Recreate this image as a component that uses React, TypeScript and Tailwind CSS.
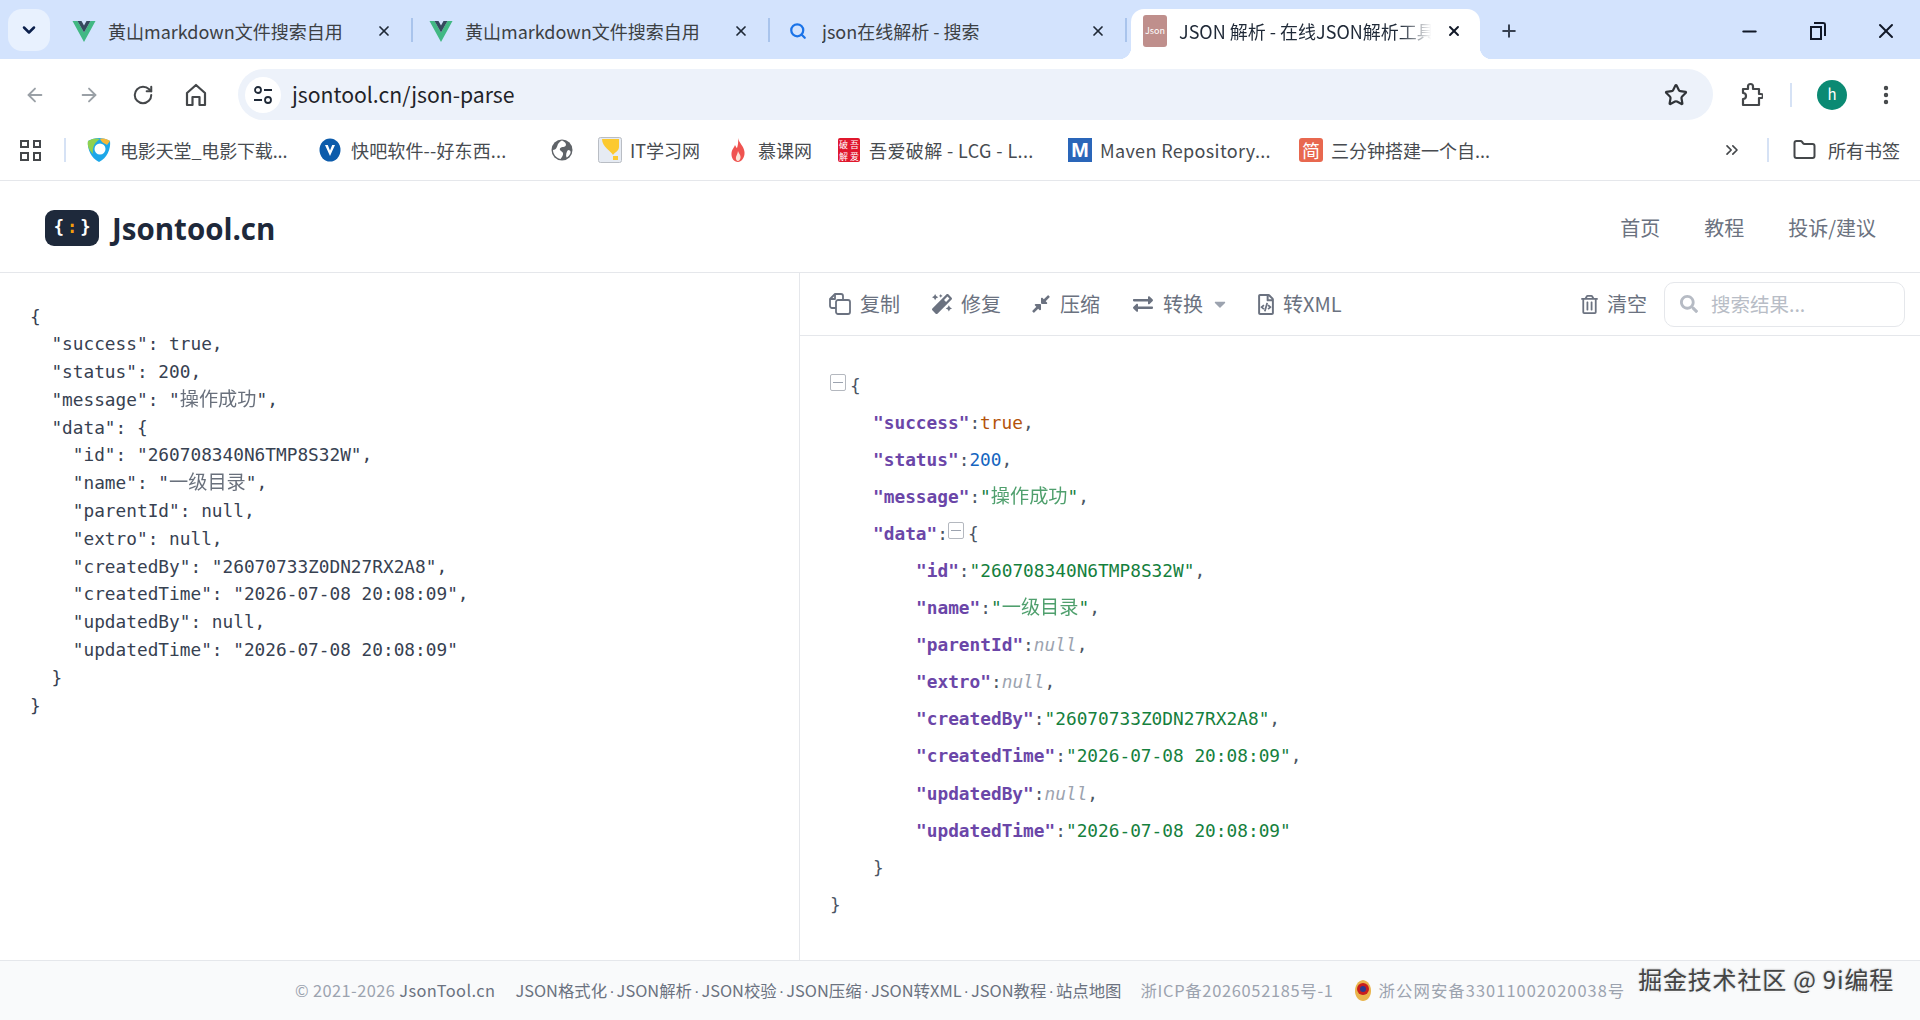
import { ArrowLeft, ArrowRight, RotateCw, Star, MoreVertical, Folder, ChevronsRight, Minus, X, Plus, ChevronDown, Search } from "lucide-react";
import { FaMagic, FaCompressAlt, FaExchangeAlt, FaCaretDown, FaRegFileCode, FaRegTrashAlt, FaSearch } from "react-icons/fa";
import type { ReactNode } from "react";

const Vue = () => (
  <svg viewBox="0 0 24 24" className="w-6 h-6 shrink-0">
    <path d="M0.5 2 L12 23 L23.5 2 H18.5 L12 13.5 L5.5 2 Z" fill="#41b883" />
    <path d="M5.5 2 L12 13.5 L18.5 2 H14.5 L12 6.5 L9.5 2 Z" fill="#35495e" />
  </svg>
);

const Tab = ({ icon, title }: { icon: ReactNode; title: string }) => (
  <div className="relative flex h-[50px] w-[357px] shrink-0 items-center gap-3 pb-[6px] pl-[15px]">
    {icon}
    <span className="flex-1 truncate text-[18px] text-[#3c4043]">{title}</span>
    <X className="mr-[22px] h-4 w-4 shrink-0 text-[#1f2937]" strokeWidth={2.6} />
    <span className="absolute right-[1px] top-[9px] h-6 w-[2px] bg-[#a9c4ec]" />
  </div>
);

const ActiveTab = () => (
  <div className="relative flex h-[50px] w-[349px] shrink-0 items-center rounded-t-[13px] bg-white pb-[6px] pl-3">
    <span className="absolute -left-3 bottom-0 h-3 w-3 bg-[radial-gradient(circle_at_0_0,#d3e3fd_12px,#ffffff_12.5px)]" />
    <span className="absolute -right-3 bottom-0 h-3 w-3 bg-[radial-gradient(circle_at_100%_0,#d3e3fd_12px,#ffffff_12.5px)]" />
    <span className="flex h-8 w-6 shrink-0 items-center justify-center rounded-[3px] bg-[#bf8f8c] text-[9px] text-white">Json</span>
    <span className="ml-[12px] w-[263px] shrink-0 overflow-hidden whitespace-nowrap text-[18px] text-[#1f2937] [mask-image:linear-gradient(to_right,#000_84%,transparent_96%)]">JSON 解析 - 在线JSON解析工具</span>
    <X className="ml-[4px] h-4 w-4 shrink-0 text-[#111827]" strokeWidth={2.8} />
  </div>
);

const Bookmark = ({ icon, text, cls }: { icon: ReactNode; text?: string; cls: string }) => (
  <div className={`flex shrink-0 items-center ${cls}`}>
    {icon}
    {text && <span className="whitespace-nowrap text-[18px] text-[#474b50]">{text}</span>}
  </div>
);

const BM = {
  movie: (
    <svg viewBox="0 0 24 26" className="h-[26px] w-6 shrink-0">
      <path d="M1 4 C8 0 16 0 23 4 C24 12 20 21 12 25 C4 21 0 12 1 4Z" fill="#1da7e8" />
      <path d="M1 4 C6 1 10 1 13 2 C8 5 5 10 6 17 C2 13 0 9 1 4Z" fill="#8fd14f" />
      <path d="M13 2 C17 1 20 2 23 4 L20 8 C17 6 15 6 13 2Z" fill="#f5b93a" />
      <circle cx="13" cy="12" r="5.5" fill="#fff" />
    </svg>
  ),
  kuaiba: (
    <svg viewBox="0 0 22 24" className="h-6 w-[22px] shrink-0">
      <ellipse cx="11" cy="12" rx="10.5" ry="11.5" fill="#0d5cab" />
      <path d="M6 7 L11 18 L16 7 L13.2 7 L11 12.5 L8.8 7Z" fill="#fff" />
    </svg>
  ),
  globe: (
    <svg viewBox="0 0 22 22" className="h-[22px] w-[22px] shrink-0">
      <circle cx="11" cy="11" r="10.5" fill="#5f6368" />
      <path d="M11 1.5 C14 3 16 5 14.5 7 C13 8.5 10 7.5 9 9.5 C8 11.5 11 12 12 14 C12.5 16 11 18 9.5 20 C5 19 2 15 2 11 C5 11 6 8 7 5 C8 3.5 9.5 2 11 1.5Z M17 11 C19 11 20 12 19.5 14 C18.5 16.5 17 18 15.5 18.5 C14.5 16 15.5 12.5 17 11Z" fill="#fff" />
    </svg>
  ),
  it: (
    <svg viewBox="0 0 24 26" className="h-[26px] w-6 shrink-0">
      <rect x="0.5" y="0.5" width="23" height="25" rx="2" fill="#e6ebf3" stroke="#b9bdc4" />
      <path d="M4 2 H21 V10 C21 14 17 15 15 18 C13 14 4 10 4 2Z" fill="#fcc92f" />
      <rect x="15" y="19" width="5" height="4" fill="#fcc92f" />
    </svg>
  ),
  fire: (
    <svg viewBox="0 0 14 24" className="h-6 w-[14px] shrink-0">
      <path d="M7 0 C8 5 13 8 13.5 14 C14 20 10 24 7 24 C3 24 0 20 0.5 15 C1 11 3 10 4 7 C5 9 5.5 10 6 10 C7 7 7.5 4 7 0Z" fill="#ef5350" />
      <path d="M7 13 C8 16 10 17 9.5 20 C9 22 8 23 7 23 C5.5 23 4.5 21 5 19 C5.5 17 6.5 16 7 13Z" fill="#fbe3d6" />
    </svg>
  ),
  crack: (
    <span className="grid h-6 w-[22px] shrink-0 grid-cols-2 place-items-center overflow-hidden rounded-[2px] bg-[#e0182d] text-[9px] leading-[11px] text-white">
      <span>破</span><span>吾</span><span>解</span><span>爱</span>
    </span>
  ),
  maven: <span className="flex h-6 w-6 shrink-0 items-center justify-center bg-[#2a66b9] text-[21px] font-bold text-white [font-family:'Liberation_Sans',sans-serif]">M</span>,
  jian: <span className="flex h-6 w-6 shrink-0 items-center justify-center rounded-[3px] bg-[#e8684f] text-[18px] text-white">简</span>,
};

const Cjk = ({ children }: { children: ReactNode }) => (
  <span className="text-[19.2px] leading-[0] opacity-75 [font-family:'Noto_Sans_CJK_SC',sans-serif]">{children}</span>
);

const leftLines: ReactNode[] = [
  "{",
  '  "success": true,',
  '  "status": 200,',
  <>  "message": "<Cjk>操作成功</Cjk>",</>,
  '  "data": {',
  '    "id": "260708340N6TMP8S32W",',
  <>    "name": "<Cjk>一级目录</Cjk>",</>,
  '    "parentId": null,',
  '    "extro": null,',
  '    "createdBy": "26070733Z0DN27RX2A8",',
  '    "createdTime": "2026-07-08 20:08:09",',
  '    "updatedBy": null,',
  '    "updatedTime": "2026-07-08 20:08:09"',
  "  }",
  "}",
];

const Fold = () => (
  <span className="relative inline-block h-[17px] w-[16px] shrink-0 rounded-[2px] border border-[#b4b8bf] align-[1px]">
    <span className="absolute left-[2px] right-[2px] top-[7px] h-[1px] bg-[#9ca3af]" />
  </span>
);

const K = ({ children }: { children: string }) => <span className="font-bold text-[#6b46a8]">"{children}"</span>;
const S = ({ children }: { children: ReactNode }) => <span className="text-[#15803d]">"{children}"</span>;
const Null = () => <span className="italic text-[#9ca3af]">null</span>;
const P = ({ children }: { children: string }) => <span className="text-[#4b5563]">{children}</span>;

const Row = ({ pl, children }: { pl: string; children: ReactNode }) => (
  <div className={`h-[37.1px] whitespace-pre leading-[37.1px] ${pl}`}>{children}</div>
);

const Tool = ({ icon, label, cls }: { icon: ReactNode; label: string; cls?: string }) => (
  <div className={`flex items-center gap-[9px] text-[20px] text-[#6b7280] ${cls ?? ""}`}>
    {icon}
    <span>{label}</span>
  </div>
);

const CopyIcon = () => (
  <svg viewBox="0 0 22 22" className="h-[22px] w-[22px]" fill="none" stroke="currentColor" strokeWidth="1.8" strokeLinejoin="round">
    <path d="M7 15 H3 A2 2 0 0 1 1 13 V6 L6 1 H12 A2 2 0 0 1 14 3 V7" />
    <path d="M1 6 H6 V1" />
    <path d="M9 7 H19 A2 2 0 0 1 21 9 V19 A2 2 0 0 1 19 21 H9 A2 2 0 0 1 7 19 V9 A2 2 0 0 1 9 7 Z" />
  </svg>
);

const Dot = () => <span className="px-[2px] font-['Liberation_Sans',sans-serif]">·</span>;

export default function App() {
  return (
    <div className="relative flex h-[1020px] w-full flex-col overflow-hidden bg-white font-['Noto_Sans_CJK_SC',sans-serif]">
      {/* tab strip */}
      <div className="flex h-[59px] shrink-0 items-end bg-[#d3e3fd] pl-2">
        <div className="mb-2 flex h-[42px] w-[42px] shrink-0 items-center justify-center rounded-[14px] bg-[#e8f1fe]">
          <ChevronDown className="h-5 w-5 text-[#0b1f4b]" strokeWidth={3} />
        </div>
        <div className="ml-[7px] flex items-center">
          <Tab icon={<Vue />} title="黄山markdown文件搜索自用" />
          <Tab icon={<Vue />} title="黄山markdown文件搜索自用" />
          <Tab icon={<Search className="h-[18px] w-6 shrink-0 text-[#1a73e8]" strokeWidth={3} />} title="json在线解析 - 搜索" />
        </div>
        <div className="ml-[3px]"><ActiveTab /></div>
        <div className="flex h-[50px] flex-1 items-center pb-[6px]">
          <Plus className="ml-[19px] h-5 w-5 text-[#374151]" strokeWidth={2.4} />
          <div className="ml-auto flex items-center pr-[22px]">
            <Minus className="mr-[50px] h-[21px] w-[21px] text-[#111827]" strokeWidth={2.5} />
            <div className="relative mr-[48px] h-[18px] w-[16px]">
              <span className="absolute bottom-0 left-0 h-[14px] w-[12px] border-2 border-[#111827] bg-[#d3e3fd]" />
              <span className="absolute right-0 top-0 h-[14px] w-[12px] rounded-tr-[3px] border-r-2 border-t-2 border-[#111827]" />
            </div>
            <X className="h-6 w-6 text-[#111827]" strokeWidth={2} />
          </div>
        </div>
      </div>

      {/* toolbar */}
      <div className="flex h-[61px] shrink-0 items-end rounded-tl-[10px] bg-white pl-[24px]">
        <div className="flex h-[51px] w-full items-center">
          <ArrowLeft className="h-[22px] w-[22px] text-[#9aa0a6]" strokeWidth={2} />
          <ArrowRight className="ml-[32px] h-[22px] w-[22px] text-[#9aa0a6]" strokeWidth={2} />
          <RotateCw className="ml-[32px] h-[22px] w-[22px] text-[#44474a]" strokeWidth={2.2} />
          <svg viewBox="0 0 22 24" className="ml-[31px] h-6 w-[22px]" fill="none" stroke="#44474a" strokeWidth="2.2" strokeLinejoin="round">
            <path d="M2 10 L11 2 L20 10 V22 H14.5 V14 H7.5 V22 H2 Z" />
          </svg>
          <div className="ml-[31px] flex h-[51px] w-[1475px] items-center rounded-full bg-[#edf2fa] pl-[7px]">
            <div className="flex h-[36px] w-[36px] items-center justify-center rounded-full bg-white">
              <svg viewBox="0 0 20 20" className="h-5 w-5" fill="none" stroke="#1f2937" strokeWidth="1.8">
                <circle cx="5" cy="5" r="3" />
                <path d="M11 5 H19 M1 15 H9" />
                <circle cx="15" cy="15" r="3" />
              </svg>
            </div>
            <span className="mb-[2px] ml-[11px] text-[21.2px] text-[#1f2328]">jsontool.cn/json-parse</span>
            <Star className="ml-auto mr-[25px] h-[24px] w-[24px] text-[#2f3337]" strokeWidth={2.2} />
          </div>
          <svg viewBox="0 0 24 24" className="ml-[26px] h-[28px] w-[24px]" fill="none" stroke="#44474a" strokeWidth="2.2" strokeLinejoin="round">
            <path d="M4 6 H9 V3.5 A2.5 2.5 0 0 1 14 3.5 V6 H20 V11 H22 A2 2 0 0 1 22 15 H20 V22 H4 V16 A3 3 0 0 0 4 10 Z" />
          </svg>
          <span className="ml-[27px] h-6 w-[2px] bg-[#d6e2f5]" />
          <span className="ml-[25px] flex h-[30px] w-[30px] items-center justify-center rounded-full bg-[#0b8a73] text-[15px] text-white">h</span>
          <MoreVertical className="ml-[27px] h-6 w-6 text-[#44474a]" strokeWidth={2.4} />
        </div>
      </div>

      {/* bookmarks */}
      <div className="flex h-[61px] shrink-0 items-center border-b border-[#e5e7eb] pl-5">
        <div className="grid h-[21px] w-[21px] shrink-0 grid-cols-2 gap-[4px]">
          <span className="border-2 border-[#44474a]" /><span className="border-2 border-[#44474a]" />
          <span className="border-2 border-[#44474a]" /><span className="border-2 border-[#44474a]" />
        </div>
        <span className="ml-[23px] mr-[21px] h-6 w-[2px] bg-[#d6e2f5]" />
        <Bookmark icon={BM.movie} text="电影天堂_电影下载..." cls="w-[232px] gap-[9px] [&>span:last-child]:-tracking-[0.15px]" />
        <Bookmark icon={BM.kuaiba} text="快吧软件--好东西..." cls="w-[232px] gap-[10px] [&>span]:tracking-[0.15px]" />
        <Bookmark icon={BM.globe} cls="w-[47px]" />
        <Bookmark icon={BM.it} text="IT学习网" cls="w-[133px] gap-[8px]" />
        <Bookmark icon={BM.fire} text="慕课网" cls="w-[107px] gap-[13px]" />
        <Bookmark icon={BM.crack} text="吾爱破解 - LCG - L..." cls="w-[230px] gap-[9px] [&>span:last-child]:tracking-[0.4px]" />
        <Bookmark icon={BM.maven} text="Maven Repository..." cls="w-[231px] gap-[8px] [&>span:last-child]:tracking-[0.35px]" />
        <Bookmark icon={BM.jian} text="三分钟搭建一个自..." cls="w-[220px] gap-[8px]" />
        <div className="ml-auto flex items-center pr-5">
          <ChevronsRight className="h-5 w-5 text-[#44474a]" strokeWidth={2} />
          <span className="ml-[25px] h-6 w-[2px] bg-[#d6e2f5]" />
          <Folder className="ml-[23px] h-[24px] w-[25px] text-[#44474a]" strokeWidth={2} />
          <span className="ml-[11px] text-[18px] text-[#474b50]">所有书签</span>
        </div>
      </div>

      {/* site header */}
      <div className="flex h-[92px] shrink-0 items-center border-b border-[#e5e7eb] pl-[45px] pr-[44px] pt-[2px]">
        <div className="flex h-9 w-[54px] items-center justify-center gap-[3px] rounded-[9px] bg-[#1e293b] font-['DejaVu_Sans_Mono',monospace] text-[17px] font-bold text-white">
          <span>{"{"}</span><span className="text-[#f59e0b]">:</span><span>{"}"}</span>
        </div>
        <span className="ml-[13px] mt-[3px] font-['Open_Sans',sans-serif] text-[29.5px] font-bold leading-none text-[#1e293b]">Jsontool.cn</span>
        <nav className="ml-auto flex items-center gap-[44px] text-[20px] text-[#6b7280]">
          <span>首页</span><span>教程</span><span>投诉/建议</span>
        </nav>
      </div>

      {/* main */}
      <div className="flex min-h-0 flex-1">
        <div className="w-[800px] shrink-0 border-r border-[#e5e7eb] pl-[30px] pt-[29.5px]">
          <div className="font-['DejaVu_Sans_Mono','Noto_Sans_CJK_SC',monospace] text-[17.78px] leading-[27.8px] text-[#374151]">
            {leftLines.map((l, i) => (
              <div key={i} className="h-[27.8px] whitespace-pre">{l}</div>
            ))}
          </div>
        </div>
        <div className="flex min-w-0 flex-1 flex-col">
          <div className="flex h-[63px] shrink-0 items-center border-b border-[#e5e7eb] pl-[29px] pr-[15px]">
            <Tool icon={<CopyIcon />} label="复制" cls="mr-[32px]" />
            <Tool icon={<FaMagic className="h-5 w-5" />} label="修复" cls="mr-[30px]" />
            <Tool icon={<FaCompressAlt className="h-[20px] w-[20px]" />} label="压缩" cls="mr-[32px]" />
            <Tool icon={<FaExchangeAlt className="h-[20px] w-[22px]" />} label="转换" />
            <FaCaretDown className="ml-[10px] mr-[30px] h-[18px] w-[14px] text-[#9ca3af]" />
            <Tool icon={<FaRegFileCode className="h-[21px] w-[18px]" />} label="转XML" cls="[&>span]:-ml-[1px]" />
            <Tool icon={<FaRegTrashAlt className="h-[19px] w-[17px]" />} label="清空" cls="ml-auto" />
            <div className="ml-[17px] flex h-[45px] w-[241px] items-center rounded-[10px] border border-[#e5e7eb] pl-[15px]">
              <FaSearch className="h-[18px] w-[18px] text-[#b6bbc4]" />
              <span className="ml-[13px] text-[19.5px] text-[#b8bdc6]">搜索结果...</span>
            </div>
          </div>
          <div className="pl-[30px] pt-[30.5px] font-['DejaVu_Sans_Mono','Noto_Sans_CJK_SC',monospace] text-[17.8px] text-[#4b5563]">
            <Row pl="pl-0"><Fold /><span className="ml-1">{"{"}</span></Row>
            <Row pl="pl-[43px]"><K>success</K><P>:</P><span className="text-[#b45309]">true</span><P>,</P></Row>
            <Row pl="pl-[43px]"><K>status</K><P>:</P><span className="text-[#1565c0]">200</span><P>,</P></Row>
            <Row pl="pl-[43px]"><K>message</K><P>:</P><S><Cjk>操作成功</Cjk></S><P>,</P></Row>
            <Row pl="pl-[43px]"><K>data</K><P>:</P><Fold /><span className="ml-1">{"{"}</span></Row>
            <Row pl="pl-[86px]"><K>id</K><P>:</P><S>260708340N6TMP8S32W</S><P>,</P></Row>
            <Row pl="pl-[86px]"><K>name</K><P>:</P><S><Cjk>一级目录</Cjk></S><P>,</P></Row>
            <Row pl="pl-[86px]"><K>parentId</K><P>:</P><Null /><P>,</P></Row>
            <Row pl="pl-[86px]"><K>extro</K><P>:</P><Null /><P>,</P></Row>
            <Row pl="pl-[86px]"><K>createdBy</K><P>:</P><S>26070733Z0DN27RX2A8</S><P>,</P></Row>
            <Row pl="pl-[86px]"><K>createdTime</K><P>:</P><S>2026-07-08 20:08:09</S><P>,</P></Row>
            <Row pl="pl-[86px]"><K>updatedBy</K><P>:</P><Null /><P>,</P></Row>
            <Row pl="pl-[86px]"><K>updatedTime</K><P>:</P><S>2026-07-08 20:08:09</S></Row>
            <Row pl="pl-[43px]">{"}"}</Row>
            <Row pl="pl-0">{"}"}</Row>
          </div>
        </div>
      </div>

      {/* footer */}
      <div className="flex h-[60px] shrink-0 items-center border-t border-[#e5e7eb] bg-[#f9fafb] pl-[295px] text-[16.4px] text-[#9ca3af]">
        <span className="tracking-[0.4px]">© 2021-2026 <span className="text-[#6b7280]">JsonTool.cn</span></span>
        <span className="ml-[20px] text-[#6b7280]">JSON格式化<Dot />JSON解析<Dot />JSON校验<Dot />JSON压缩<Dot />JSON转XML<Dot />JSON教程<Dot />站点地图</span>
        <span className="ml-[19px] tracking-[0.7px]">浙ICP备2026052185号-1</span>
        <svg viewBox="0 0 18 22" className="ml-[20px] h-[22px] w-[18px]">
          <path d="M9 0 C14 1 17 5 17 11 C17 17 13 21 9 21 C5 21 1 17 1 11 C1 5 4 1 9 0Z" fill="#e9b44c" />
          <circle cx="9" cy="9" r="6" fill="#c81e1e" />
          <circle cx="9" cy="9" r="3" fill="#2b3a8f" />
        </svg>
        <span className="ml-[7px] tracking-[1.05px]">浙公网安备33011002020038号</span>
      </div>

      <div className="absolute bottom-[29px] right-[26px] text-[24px] leading-none tracking-[0.8px] text-[#444444] [text-shadow:1px_1px_1px_#ffffff,0_0_2px_#888888]">掘金技术社区 @ 9i编程</div>
    </div>
  );
}
